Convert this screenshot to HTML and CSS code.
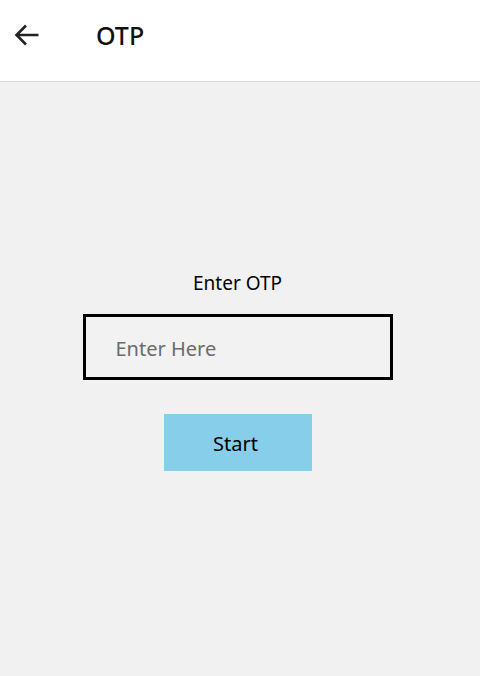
FILE: index.html
```html
<!DOCTYPE html>
<html>
<head>
<meta charset="utf-8">
<link rel="stylesheet" href="styles.css">
</head>
<body>
<header class="topbar">
  <button class="back" aria-label="Back">
    <svg width="28" height="28" viewBox="0 0 28 28"><path d="M25.5 14H4M13 4.5L3.5 14L13 23.5" fill="none" stroke="#222" stroke-width="2.6"/></svg>
  </button>
  <h1 class="title">OTP</h1>
</header>
<main class="content">
  <label class="label" for="otp">Enter OTP</label>
  <input id="otp" class="field" type="text" placeholder="Enter Here">
  <button class="start">Start</button>
</main>
</body>
</html>
```
FILE: styles.css
```css
* { box-sizing: border-box; }
html, body { margin: 0; height: 100%; }
body {
  font-family: "Noto Sans", "Open Sans", sans-serif;
  background: #f1f1f1;
  color: #000;
}
.topbar {
  height: 82px;
  background: #fff;
  border-bottom: 1px solid #d8d8d8;
  display: flex;
  align-items: center;
  padding-left: 13px;
}
.back {
  border: 0;
  background: none;
  padding: 0;
  width: 28px;
  height: 28px;
  display: flex;
  margin-top: -12px;
}
.title {
  margin: -12px 0 0 55px;
  font-size: 25px;
  font-weight: 500;
  color: #111;
}
.content {
  display: flex;
  flex-direction: column;
  align-items: center;
  padding-top: 188px;
  padding-right: 5px;
}
.label {
  font-size: 19px;
  line-height: 26px;
}
.field {
  margin-top: 18px;
  width: 310px;
  height: 66px;
  border: 3px solid #000;
  background: #f2f2f2;
  font-family: inherit;
  font-size: 20px;
  padding: 3px 0 0 30px;
  outline: none;
}
.field::placeholder { color: #6b6b6b; }
.start {
  margin-top: 34px;
  width: 148px;
  height: 57px;
  border: 0;
  background: #87ceeb;
  font-family: inherit;
  font-size: 20px;
  color: #000;
  padding: 2px 4px 0 0;
}
```
